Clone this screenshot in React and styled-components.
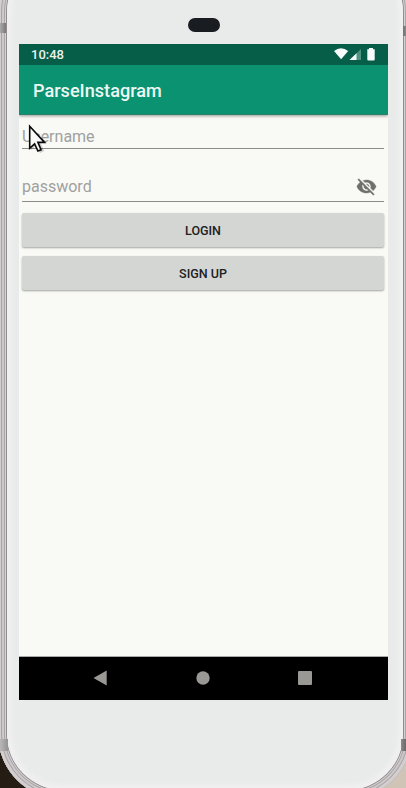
import React from "react";
import styled, { createGlobalStyle } from "styled-components";

const Global = createGlobalStyle`
  * { box-sizing: border-box; }
  body { margin: 0; overflow: hidden; font-family: Roboto, "Noto Sans", sans-serif; }
`;

const Stage = styled.div`
  position: relative;
  width: 406px;
  height: 788px;
  overflow: hidden;
  display: flex;
  align-items: flex-start;
  background: linear-gradient(90deg, #251d14 0 45%, #cfc4b6 55% 100%);
`;

const Phone = styled.div`
  flex: none;
  width: 414px;
  height: 852px;
  margin: -53px 0 0 -2px;
  padding: 9px;
  border-radius: 65px;
  background: #c9c5c6;
  box-shadow: inset 0 0 0 3px #d3cecf, inset 0 0 0 4px #aaa3a5, inset 0 0 0 6px #cdc8ca,
    inset 0 0 0 7px #aaa5a7, inset 0 0 0 8px #d5d1d3;
`;

const Face = styled.div`
  height: 834px;
  padding: 44px 15px 0 12px;
  border-radius: 56px;
  background: #e8ebe9;
  box-shadow: 0 0 0 1px #918c8e, inset 0 0 5px 5px #f0f0f0;
  display: flex;
  flex-direction: column;
`;

const Bezel = styled.div`
  flex: none;
  height: 44px;
  padding-top: 18px;
  display: flex;
  justify-content: center;
`;

const Speaker = styled.div`
  width: 32px;
  height: 14px;
  border-radius: 7px;
  background: #191c20;
`;

const Band = styled.div`
  position: absolute;
  top: ${(p) => p.$top}px;
  ${(p) => p.$side}: 0;
  width: ${(p) => p.$width}px;
  height: ${(p) => p.$height}px;
  background: linear-gradient(90deg, ${(p) => p.$from}, ${(p) => p.$to});
`;

const Screen = styled.div`
  flex: none;
  width: 369px;
  height: 656px;
  display: flex;
  flex-direction: column;
  background: #f9faf6;
`;

const StatusBar = styled.div`
  flex: none;
  height: 21px;
  padding: 0 12px;
  display: flex;
  align-items: center;
  justify-content: space-between;
  background: #075e48;
  color: #e9f3ee;
  font-size: 13px;
  font-weight: 500;
  line-height: 21px;
`;

const StatusIcons = styled.svg`
  width: 42px;
  height: 15px;
`;

const AppBar = styled.div`
  flex: none;
  height: 50px;
  padding: 2px 14px 0;
  display: flex;
  align-items: center;
  background: #0b9271;
  border-bottom: 1px solid #2c8069;
  box-shadow: 0 1px 3px rgba(0, 0, 0, 0.4);
  clip-path: inset(0 0 -6px 0);
  color: #edf8f3;
  font-size: 18.1px;
  font-weight: 500;
`;

const Form = styled.div`
  flex: 1;
  padding: 0 4px 0 3px;
  display: flex;
  flex-direction: column;
`;

const Field = styled.div`
  flex: none;
  height: ${(p) => p.$height}px;
  padding: 0 7px ${(p) => p.$bottom}px 0;
  display: flex;
  align-items: flex-end;
  justify-content: space-between;
  border-bottom: 1px solid #8c8c8a;
  color: #a0a19e;
  font-size: 16px;
  line-height: 20px;
`;

const EyeOff = styled.svg`
  width: 21px;
  height: 21px;
  fill: #6f706d;
  stroke: #6f706d;
  stroke-width: 0.4px;
`;

const Button = styled.div`
  flex: none;
  height: 34px;
  margin-top: ${(p) => p.$gap}px;
  display: flex;
  align-items: center;
  justify-content: center;
  border-radius: 2px;
  background: #d4d6d3;
  box-shadow: 0 1px 2px rgba(0, 0, 0, 0.34);
  color: #20211f;
  font-size: 12.5px;
  font-weight: 500;
`;

const NavBar = styled.div`
  flex: none;
  height: 44px;
  padding: 0 75px 2px 74px;
  display: flex;
  align-items: center;
  justify-content: space-between;
  background: #000;
  border-top: 1px solid #aaa9a8;
`;

const NavIcon = styled.svg`
  width: 16px;
  height: 16px;
  fill: #999894;
`;

const Pointer = styled.svg`
  position: absolute;
  left: 27px;
  top: 123px;
  width: 22px;
  height: 32px;
`;

export default function App() {
  return (
    <Stage>
      <Global />
      <Phone>
        <Face>
          <Bezel>
            <Speaker />
          </Bezel>
          <Screen>
            <StatusBar>
              <span>10:48</span>
              <StatusIcons viewBox="0 0 42 15">
                <path d="M0 4Q7 -1.7 14.2 4L7.1 12.3Z" fill="#f7fbf9" />
                <path d="M15.5 13L27 2V13Z" fill="#4f9480" />
                <path d="M15.5 13L22.5 6.3V13Z" fill="#f7fbf9" />
                <path d="M33.3 2.2h1.7V1h4v1.2h1.7V12.5q0 1-1 1h-5.4q-1 0-1-1Z" fill="#f7fbf9" />
              </StatusIcons>
            </StatusBar>
            <AppBar>ParseInstagram</AppBar>
            <Form>
              <Field $height={34} $bottom={1}>
                <span>Username</span>
              </Field>
              <Field $height={53} $bottom={4}>
                <span>password</span>
                <EyeOff viewBox="0 0 24 24">
                  <path d="M12 7c2.76 0 5 2.24 5 5 0 .65-.13 1.26-.36 1.83l2.92 2.92c1.51-1.26 2.7-2.89 3.43-4.75-1.73-4.39-6-7.5-11-7.5-1.4 0-2.74.25-3.98.7l2.16 2.16C10.74 7.13 11.35 7 12 7zM2 4.27l2.28 2.28.46.46C3.08 8.3 1.78 10.02 1 12c1.73 4.39 6 7.5 11 7.5 1.55 0 3.03-.3 4.38-.84l.42.42L19.73 22 21 20.73 3.27 3 2 4.27zM7.53 9.8l1.55 1.55c-.05.21-.08.43-.08.65 0 1.66 1.34 3 3 3 .22 0 .44-.03.65-.08l1.55 1.55c-.67.33-1.41.53-2.2.53-2.76 0-5-2.24-5-5 0-.79.2-1.53.53-2.2zm4.31-.78l3.15 3.15.02-.16c0-1.66-1.34-3-3-3l-.17.01z" />
                </EyeOff>
              </Field>
              <Button $gap={11}>LOGIN</Button>
              <Button $gap={9}>SIGN UP</Button>
            </Form>
            <NavBar>
              <NavIcon viewBox="0 0 16 16">
                <path d="M0.5 8L13.7 0.5V15.5Z" />
              </NavIcon>
              <NavIcon viewBox="0 0 16 16">
                <circle cx="8" cy="8" r="6.7" />
              </NavIcon>
              <NavIcon viewBox="0 0 16 16">
                <rect x="1" y="1" width="14" height="14" rx="1" />
              </NavIcon>
            </NavBar>
          </Screen>
        </Face>
      </Phone>
      <Band $side="left" $top={23} $width={6} $height={10} $from="#aaa9a9" $to="#7b7879" />
      <Band $side="right" $top={26} $width={3} $height={10} $from="#727072" $to="#898788" />
      <Band $side="left" $top={739} $width={8} $height={12} $from="#b9b8b8" $to="#949293" />
      <Band $side="right" $top={739} $width={5} $height={12} $from="#8c8a8b" $to="#686667" />
      <Pointer viewBox="0 0 22 32">
        <path d="M4 4V27L9 22L13 30L17 28L13.5 20H20Z" fill="#0003" />
        <path
          d="M2.7 3.3V25.3L7.6 20.9L10.9 28L14 26.7L10.9 19.4H17.5Z"
          fill="#fafaf8"
          stroke="#090909"
          strokeWidth="1.6"
        />
      </Pointer>
    </Stage>
  );
}
